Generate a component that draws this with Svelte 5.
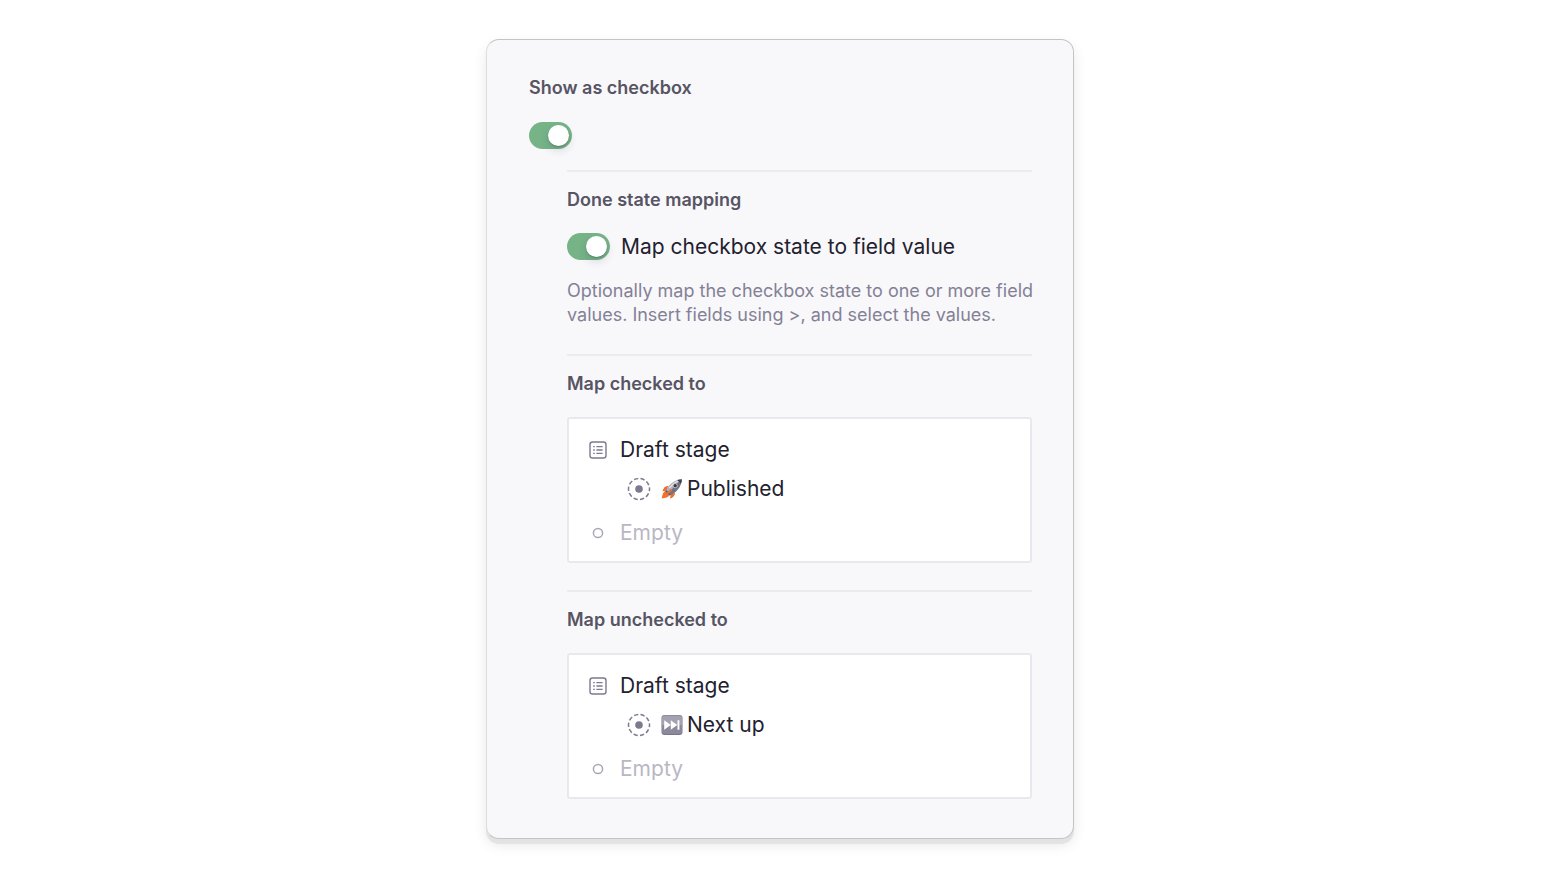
<script>
  let showAsCheckbox = $state(true);
  let mapState = $state(true);

  const mappings = [
    { id: 'checked', title: 'Map checked to', field: 'Draft stage', value: 'Published', icon: 'rocket' },
    { id: 'unchecked', title: 'Map unchecked to', field: 'Draft stage', value: 'Next up', icon: 'next' }
  ];
</script>

<main>
  <section class="card">
    <label class="heading" for="show-as-checkbox">Show as checkbox</label>
    <input id="show-as-checkbox" class="switch" type="checkbox" role="switch" bind:checked={showAsCheckbox} />

    <div class="nested">
      <section class="group">
        <h2 class="heading">Done state mapping</h2>
        <div class="switch-row">
          <input id="map-state" class="switch" type="checkbox" role="switch" bind:checked={mapState} />
          <label for="map-state">Map checkbox state to field value</label>
        </div>
        <p class="hint">Optionally map the checkbox state to one or more field values. Insert fields using &gt;, and select the values.</p>
      </section>

      {#each mappings as m (m.id)}
        <section class="group">
          <h2 class="heading">{m.title}</h2>
          <div class="box">
            <div class="row">
              <svg class="lead" width="20" height="20" viewBox="0 0 20 20" fill="none" stroke="#7c7990" stroke-width="1.4" aria-hidden="true">
                <rect x="2" y="2" width="16" height="16" rx="2.6" />
                <path d="M8.4 6.6h6.2M8.4 10h6.2M8.4 13.4h6.2" />
                <path d="M5.2 6.6h1.6M5.2 10h1.6M5.2 13.4h1.6" />
              </svg>
              <span>{m.field}</span>
            </div>
            <div class="row value">
              <svg width="24" height="24" viewBox="0 0 24 24" fill="none" aria-hidden="true">
                <circle cx="12" cy="12" r="10.5" stroke="#7c7990" stroke-width="1.5" stroke-dasharray="4.3 2.3" stroke-dashoffset="2.1" />
                <circle cx="12" cy="12" r="3.8" fill="#7c7990" />
              </svg>
              {#if m.icon === 'rocket'}
                <svg class="emoji" width="22" height="22" viewBox="0 0 22 22" aria-hidden="true">
                  <path d="M7.4 7.8C4.6 8 2.4 9.8 1.4 13.2l4-.8z" fill="#f06a2c" />
                  <path d="M14 14.2c.2 2.9-1.3 5-4.9 6.600l.5-4.400z" fill="#f06a2c" />
                  <path d="M4.3 12.8c-2 1.2-2.9 3.8-3.6 7.700 3.900-.4 6.600-1.400 7.900-3.500z" fill="#f4702c" />
                  <path d="M4.6 13.3C7 7.2 12.5 2 20.8 1.2 20.2 9.2 15 14.8 8.8 17.2z" fill="#b0b0ba" />
                  <path d="M8 16.200C10.8 10.6 15 5.7 20.8 1.2 20.2 9.2 15 14.8 8.8 17.2z" fill="#737280" />
                  <path d="M8.4 10.2C11 6.7 14 4.4 17.4 3.2" stroke="#e4e4ea" stroke-width="1.4" fill="none" />
                  <path d="M16.2 2.1c1.5-.5 3-.8 4.6-.9-.1 1.7-.4 3.2-.9 4.6z" fill="#41404e" />
                  <circle cx="14.2" cy="7.7" r="2.1" fill="#383745" stroke="#d4d4dc" stroke-width=".8" />
                  <path d="M4.3 13.2l.7-1.5 5.1 5-1.4.7z" fill="#5d5b69" />
                  <path d="M5.5 16.3l5-4.8" stroke="#f06a2c" stroke-width="1.8" />
                </svg>
              {:else}
                <svg class="emoji" width="22" height="22" viewBox="0 0 22 22" aria-hidden="true">
                  <rect x="0.5" y="1" width="21" height="20" rx="3" fill="#77758a" />
                  <rect x="1" y="1.5" width="20" height="18" rx="2.5" fill="#a3a2b0" />
                  <path d="M1 11h20v6.500a2.500 2.500 0 0 1-2.500 2.500h-15A2.500 2.500 0 0 1 1 17.500z" fill="#8b899b" />
                  <path d="M3.2 6.3l6.6 4.7-6.6 4.700zM9.800 6.300l6.500 4.700-6.500 4.700zM16.500 6.300h1.900v9.400h-1.900z" fill="#fff" />
                </svg>
              {/if}
              <span>{m.value}</span>
            </div>
            <div class="row empty">
              <svg class="lead" width="20" height="20" viewBox="0 0 20 20" fill="none" stroke="#a9a7b6" stroke-width="1.5" aria-hidden="true">
                <circle cx="10" cy="10" r="4.6" />
              </svg>
              <input type="text" placeholder="Empty" aria-label={m.title} />
            </div>
          </div>
        </section>
      {/each}
    </div>
  </section>
</main>

<style>
  :global(body) {
    background: #fff;
  }

  main {
    display: flex;
    justify-content: center;
    padding: 39px 24px 24px;
    font-family: Inter, "Liberation Sans", sans-serif;
    color: #23212e;
  }

  .card {
    box-sizing: border-box;
    width: 100%;
    max-width: 588px;
    padding: 36px 41px 39px 42px;
    border: 1px solid #c4c4c6;
    border-left-color: #dddde0;
    border-radius: 13px;
    background: #f8f8fb;
    box-shadow: 0 5px 1px #e3e3e4, 0 6px 14px rgba(0, 0, 0, 0.09);
  }

  .heading {
    display: block;
    margin: 0 0 22px;
    font-size: 18px;
    font-weight: 600;
    line-height: 24px;
    color: #575463;
  }

  .group .heading {
    margin-bottom: 21px;
  }

  .switch {
    appearance: none;
    display: flex;
    align-items: center;
    flex: none;
    box-sizing: border-box;
    width: 43px;
    height: 27px;
    margin: 0;
    padding: 0 3px;
    border-radius: 14px;
    background: #c9c8d2;
    cursor: pointer;
  }

  .switch::before {
    content: "";
    width: 21px;
    height: 21px;
    border-radius: 50%;
    background: #fff;
    box-shadow: 0 1px 1px rgba(40, 60, 50, 0.3), 0 4px 8px rgba(40, 40, 70, 0.18);
  }

  .switch:checked {
    justify-content: flex-end;
    background: #76b488;
  }

  .nested {
    display: flex;
    flex-direction: column;
    gap: 27px;
    margin: 21px 0 0 38px;
  }

  .group {
    padding-top: 16px;
    border-top: 2px solid #ececf0;
  }

  .switch-row {
    display: flex;
    align-items: center;
    gap: 11px;
    font-size: 21px;
    line-height: 27px;
  }

  .hint {
    margin: 19px -8px 0 0;
    font-size: 18px;
    line-height: 24px;
    color: #848196;
  }

  .box {
    display: flex;
    flex-direction: column;
    padding: 16px 19px 13px;
    border: 2px solid #e8e8ee;
    border-radius: 3px;
    background: #fff;
  }

  .row {
    display: flex;
    align-items: center;
    font-size: 21px;
    line-height: 30px;
  }

  .lead {
    margin-right: 12px;
  }

  .value {
    margin: 9px 0 14px 39px;
  }

  .emoji {
    margin: 0 4px 0 10px;
  }

  .empty input {
    flex: 1;
    min-width: 0;
    height: 30px;
    padding: 0;
    border: 0;
    outline: 0;
    background: none;
    font: inherit;
    color: inherit;
  }

  .empty input::placeholder {
    color: #b9b7c4;
    opacity: 1;
  }
</style>
